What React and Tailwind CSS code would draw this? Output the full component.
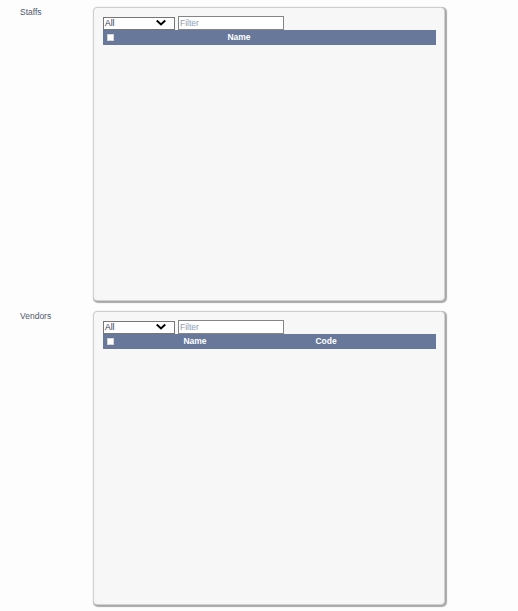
import React from "react";

const groups = [
  { label: "Staffs", cols: [{ name: "Name", w: "w-[244px]" }] },
  {
    label: "Vendors",
    cols: [
      { name: "Name", w: "w-[156px]" },
      { name: "Code", w: "w-[106px]" },
    ],
  },
];

function Chevron() {
  return (
    <svg width="10" height="6" viewBox="0 0 10 6" fill="none" stroke="#000" strokeWidth="2" strokeLinecap="square">
      <path d="M1.5 1.2 L5 4.5 L8.5 1.2" />
    </svg>
  );
}

function ListBox({ cols }) {
  return (
    <div className="w-[352px] h-[294px] rounded-[4px] border border-[#cfcfcf] bg-[#f7f7f7] shadow-[1px_1px_1px_1px_#a8a8a8] pt-[8px] pl-[9px]">
      <div className="flex items-center gap-[3px] h-[14px]">
        <div className="w-[72px] h-[13px] border border-[#767676] bg-white flex items-center justify-between pl-[1px] pr-[8px]">
          <span className="text-[8.5px] leading-none text-[#2b3550]">All</span>
          <Chevron />
        </div>
        <input
          placeholder="Filter"
          className="w-[106px] h-[14px] border border-[#858585] bg-white px-[1px] text-[8.5px] leading-none outline-none placeholder:text-[#8c9cb3]"
        />
      </div>
      <div className="flex items-center w-[333px] h-[15px] bg-[#67789b] pb-[1px]">
        <div className="w-[14px] flex justify-center pl-[1px]">
          <div className="w-[7px] h-[7px] bg-white border border-[#d6d6d6]" />
        </div>
        {cols.map((c) => (
          <div key={c.name} className={`${c.w} text-center text-[8.5px] font-bold leading-none text-white`}>
            {c.name}
          </div>
        ))}
      </div>
    </div>
  );
}

export default function App() {
  return (
    <div className="min-h-screen bg-[#fdfdfd] pt-[7px] font-['Liberation_Sans',Arial,sans-serif]">
      <div className="flex flex-col gap-[10px]">
        {groups.map((g) => (
          <div key={g.label} className="flex">
            <div className="w-[93px] pl-[20px] text-[8.5px] leading-[10px] text-[#4d586c]">{g.label}</div>
            <ListBox cols={g.cols} />
          </div>
        ))}
      </div>
    </div>
  );
}
